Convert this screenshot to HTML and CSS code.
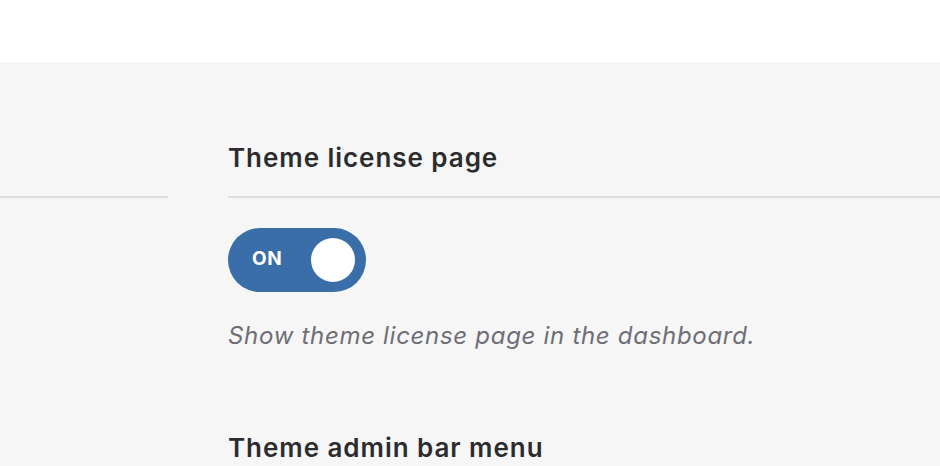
FILE: index.html
```html
<!DOCTYPE html>
<html lang="en">
<head>
<meta charset="utf-8">
<title>Settings</title>
<link rel="stylesheet" href="styles.css">
</head>
<body>
<header class="topbar"></header>
<main class="page">
  <aside class="sidebar">
    <div class="sidebar-rule"></div>
  </aside>
  <section class="content">
    <div class="setting">
      <h2 class="setting-title">Theme license page</h2>
      <button class="toggle" type="button" aria-pressed="true">
        <span class="toggle-label">ON</span>
        <span class="toggle-knob"></span>
      </button>
      <p class="setting-desc">Show theme license page in the dashboard.</p>
    </div>
    <div class="setting setting-next">
      <h2 class="setting-title">Theme admin bar menu</h2>
    </div>
  </section>
</main>
</body>
</html>
```
FILE: styles.css
```css
html, body {
  margin: 0;
  padding: 0;
  height: 100%;
  overflow: hidden;
}
body {
  font-family: Inter, "Noto Sans", "Liberation Sans", sans-serif;
  background: #f6f6f6;
}
.topbar {
  height: 62px;
  background: #ffffff;
}
.page {
  display: flex;
  background: #f6f6f6;
  min-height: 404px;
}
.sidebar {
  width: 168px;
  flex: none;
}
.sidebar-rule {
  height: 134px;
  border-bottom: 2px solid #dedede;
}
.content {
  flex: 1;
  margin-left: 60px;
}
.setting-title {
  margin: 0;
  padding-top: 80px;
  padding-bottom: 22px;
  font-size: 26px;
  line-height: 32px;
  font-weight: 600;
  letter-spacing: 0.95px;
  color: #2c2c2e;
  border-bottom: 2px solid #dedede;
}
.toggle {
  margin-top: 30px;
  width: 138px;
  height: 64px;
  border: none;
  border-radius: 32px;
  background: #3a6ea9;
  display: flex;
  align-items: center;
  justify-content: space-between;
  padding: 0 11px 0 24px;
  box-sizing: border-box;
  cursor: pointer;
}
.toggle-label {
  font-family: Inter, "Noto Sans", sans-serif;
  font-size: 19px;
  line-height: 22px;
  font-weight: 700;
  color: #ffffff;
  letter-spacing: 0.6px;
  padding-bottom: 3px;
}
.toggle-knob {
  width: 44px;
  height: 44px;
  border-radius: 50%;
  background: #ffffff;
}
.setting-desc {
  margin: 29px 0 0;
  font-size: 24px;
  line-height: 30px;
  font-style: italic;
  letter-spacing: 0.7px;
  color: #6e6e75;
}
.setting-next .setting-title {
  padding-top: 81px;
  border-bottom: none;
}
```
